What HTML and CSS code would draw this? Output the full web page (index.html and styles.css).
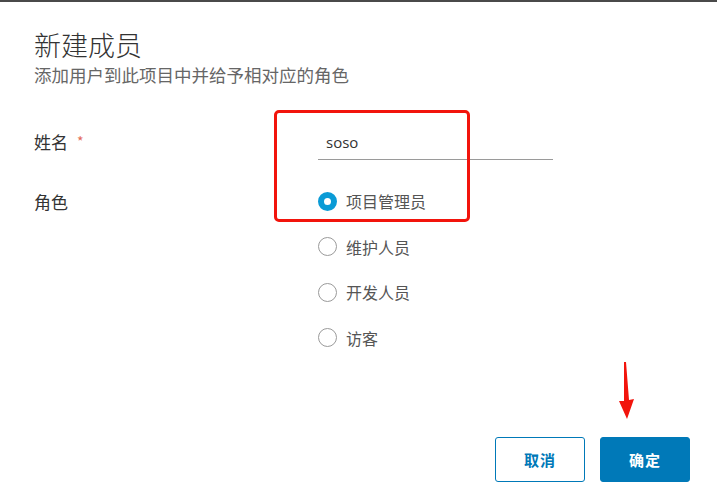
FILE: index.html
```html
<!DOCTYPE html>
<html lang="zh-CN">
<head>
<meta charset="utf-8">
<title>新建成员</title>
<link rel="stylesheet" href="styles.css">
</head>
<body>
<div class="topbar"></div>
<div class="modal">
  <header class="head">
    <h1 class="title">新建成员</h1>
    <p class="subtitle">添加用户到此项目中并给予相对应的角色</p>
  </header>
  <form class="form">
    <div class="row">
      <label class="label">姓名<span class="req">*</span></label>
      <div class="field">
        <input class="input" type="text" value="soso">
      </div>
    </div>
    <div class="row">
      <label class="label">角色</label>
      <div class="radios">
        <label class="radio"><span class="dot checked"></span><span>项目管理员</span></label>
        <label class="radio"><span class="dot"></span><span>维护人员</span></label>
        <label class="radio"><span class="dot"></span><span>开发人员</span></label>
        <label class="radio"><span class="dot"></span><span>访客</span></label>
      </div>
    </div>
  </form>
  <footer class="footer">
    <button class="btn btn-outline" type="button">取消</button>
    <button class="btn btn-primary" type="button">确定</button>
  </footer>
  <div class="highlight"></div>
  <svg class="arrow" width="24" height="60" viewBox="0 0 24 60">
    <path d="M10 0 L12 0 L15 38 L20 37 L13 57 L5 39 L10 39 Z" fill="#f2140c"/>
  </svg>
</div>
</body>
</html>
```
FILE: styles.css
```css
* { box-sizing: border-box; }
html, body { margin: 0; padding: 0; background: #fff; }
body {
  width: 717px;
  height: 504px;
  overflow: hidden;
  font-family: "Noto Sans CJK SC", "Noto Sans", sans-serif;
  color: #333;
}
.topbar {
  height: 2px;
  background: #4a4a4a;
}
.modal {
  position: relative;
  height: 502px;
  background: #fff;
  border-top-left-radius: 3px;
  padding: 0 27px 0 34px;
}
.head { padding-top: 25px; }
.title {
  margin: 0;
  font-size: 27px;
  line-height: 36px;
  font-weight: 300;
  color: #333;
}
.subtitle {
  margin: 0;
  font-size: 17.5px;
  line-height: 24px;
  font-weight: 400;
  color: #666;
}
.form { margin-top: 41px; }
.row {
  display: grid;
  grid-template-columns: 284px 235px;
}
.row + .row { margin-top: 29px; }
.label {
  font-size: 17px;
  line-height: 26px;
  color: #333;
}
.req {
  color: #e36a57;
  font-size: 14px;
  margin-left: 9px;
  vertical-align: 2px;
}
.input {
  display: block;
  width: 235px;
  height: 32px;
  border: none;
  border-bottom: 1px solid #9a9a9a;
  padding: 0 0 4px 8px;
  font-family: "Open Sans", "Noto Sans", sans-serif;
  font-size: 15px;
  color: #333;
  outline: none;
  background: transparent;
}
.radios {
  display: flex;
  flex-direction: column;
  gap: 21.5px;
}
.radio {
  display: flex;
  align-items: center;
  gap: 9px;
  font-size: 16px;
  line-height: 24px;
  color: #555;
}
.dot {
  width: 19px;
  height: 19px;
  border-radius: 50%;
  border: 1px solid #9a9a9a;
  background: #fff;
  flex: none;
}
.dot.checked {
  border: 6px solid #0a9bd6;
  background: #fff;
}
.footer {
  position: absolute;
  left: 0;
  right: 27px;
  top: 435px;
  display: flex;
  justify-content: flex-end;
  gap: 15px;
}
.btn {
  width: 90px;
  height: 45px;
  border-radius: 3px;
  font-family: "Noto Sans CJK SC", sans-serif;
  font-size: 15px;
  font-weight: 600;
  letter-spacing: 1px;
  cursor: pointer;
}
.btn-outline {
  background: #fff;
  border: 1px solid #0079b8;
  color: #0079b8;
}
.btn-primary {
  background: #0079b8;
  border: 1px solid #0079b8;
  color: #fff;
}
.highlight {
  position: absolute;
  left: 274px;
  top: 108px;
  width: 196px;
  height: 112px;
  border: 3px solid #f2140c;
  border-radius: 5px;
}
.arrow {
  position: absolute;
  left: 614px;
  top: 360px;
}
```
